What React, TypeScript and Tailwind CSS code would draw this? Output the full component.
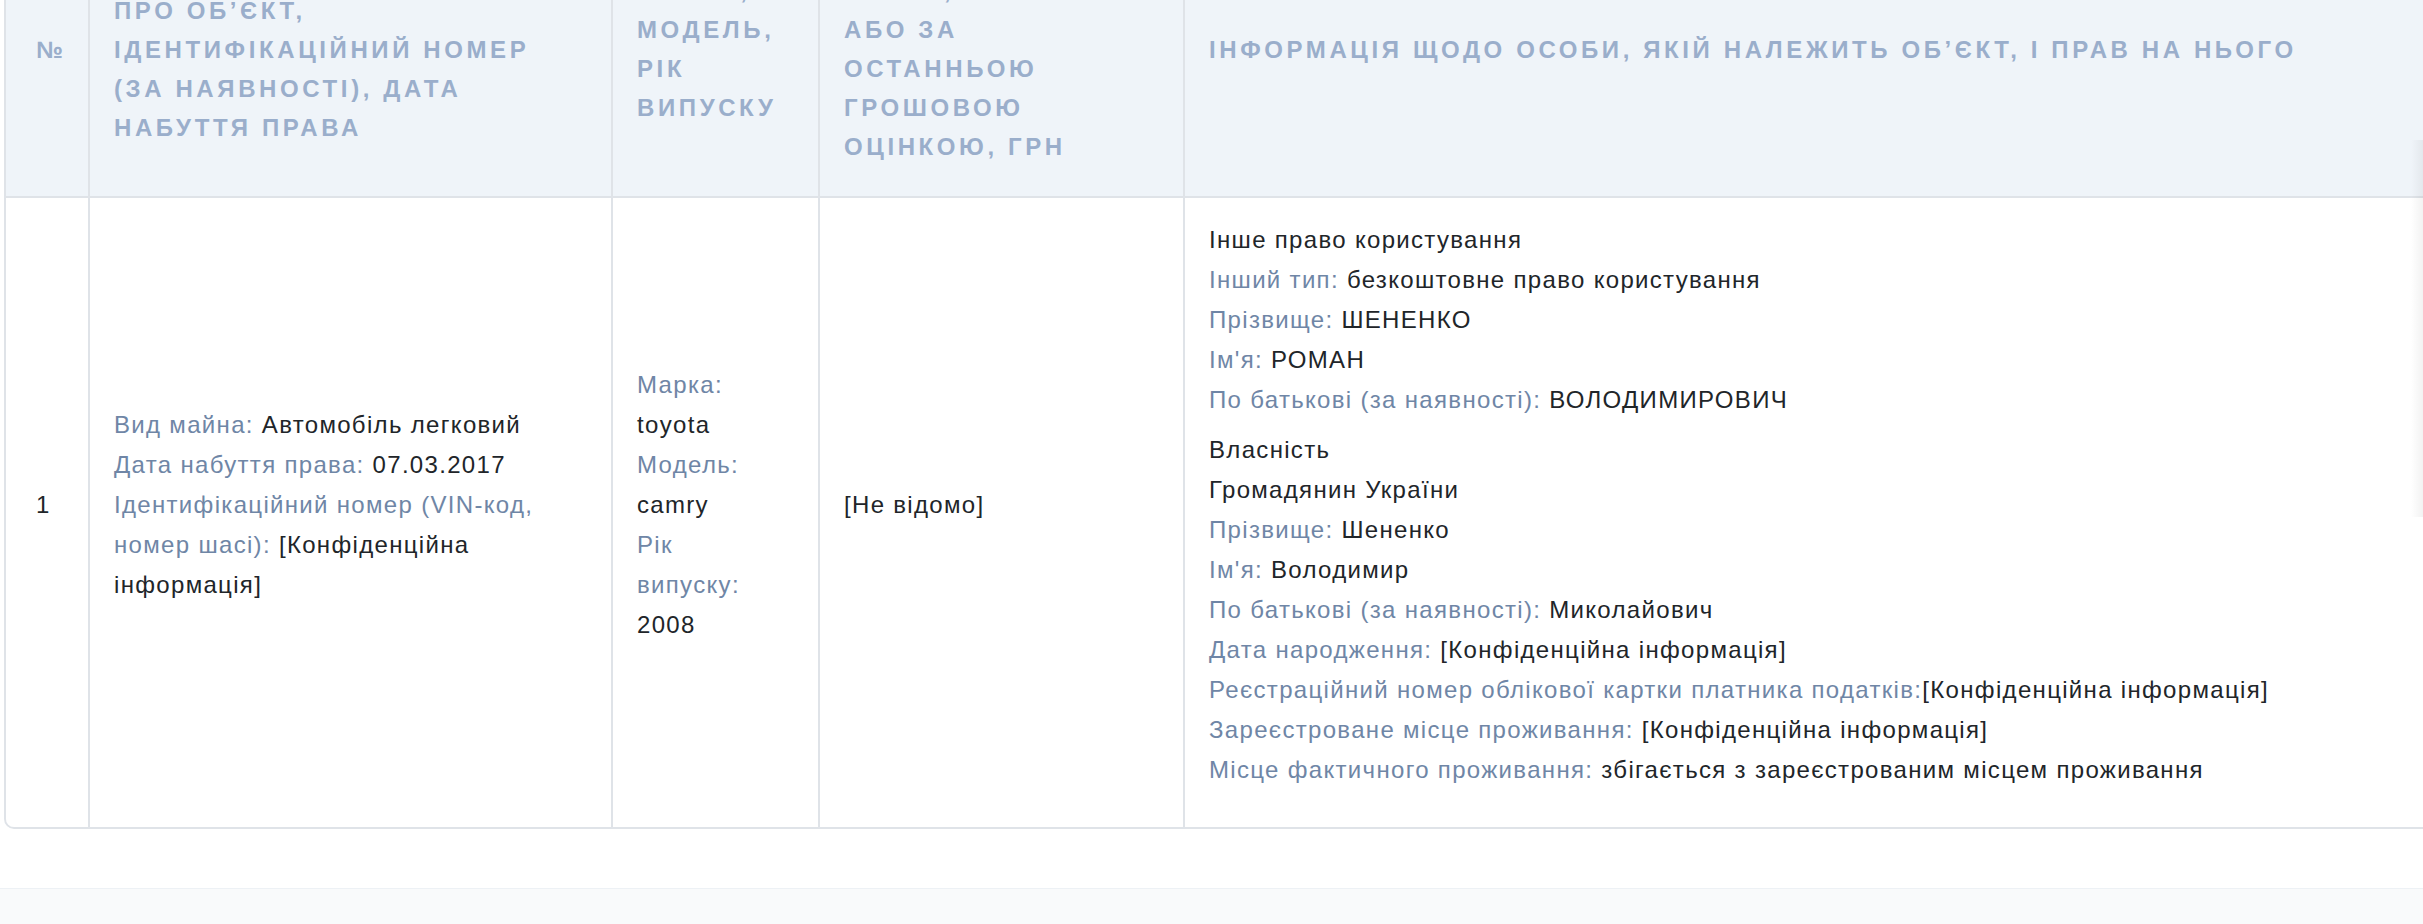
import React from 'react';

type Field = { label?: string; value: string; gap?: boolean };

const ownerGroups: Field[][] = [
  [
    { value: 'Інше право користування' },
    { label: 'Інший тип:', value: 'безкоштовне право користування' },
    { label: 'Прізвище:', value: 'ШЕНЕНКО' },
    { label: "Ім'я:", value: 'РОМАН' },
    { label: 'По батькові (за наявності):', value: 'ВОЛОДИМИРОВИЧ' },
  ],
  [
    { value: 'Власність' },
    { value: 'Громадянин України' },
    { label: 'Прізвище:', value: 'Шененко' },
    { label: "Ім'я:", value: 'Володимир' },
    { label: 'По батькові (за наявності):', value: 'Миколайович' },
    { label: 'Дата народження:', value: '[Конфіденційна інформація]' },
    { label: 'Реєстраційний номер облікової картки платника податків:', value: '[Конфіденційна інформація]', gap: true },
    { label: 'Зареєстроване місце проживання:', value: '[Конфіденційна інформація]' },
    { label: 'Місце фактичного проживання:', value: 'збігається з зареєстрованим місцем проживання' },
  ],
];

function Line({ label, value, gap }: Field) {
  return (
    <div className="whitespace-nowrap">
      {label && <span className="text-[#6f86a6]">{label}</span>}
      {label && !gap && ' '}
      <span>{value}</span>
    </div>
  );
}

const headCell =
  'flex flex-col justify-center pt-[22px] pb-[30px] px-[24px] bg-[#eff4f9] text-[#9aaecb] font-bold uppercase text-[24px] leading-[39px] tracking-[0.15em] whitespace-nowrap';
const bodyCell =
  'flex flex-col justify-center pt-[22px] pb-[37px] px-[24px] bg-white text-[24px] leading-[40px] tracking-[0.055em]';
const label = 'text-[#6f86a6]';

export default function App() {
  return (
    <div className="relative min-h-screen overflow-hidden bg-white font-['Liberation_Sans',Arial,sans-serif] text-[#212529]">
      {/* table card, scrolled so the header top is out of view */}
      <div className="-mt-[92px] pl-[4px]">
        <div className="w-[2480px] overflow-hidden rounded-[10px] border-2 border-[#dfe3e8]">
          <div className="grid grid-cols-[82px_521px_205px_363px_1fr] gap-[2px] bg-[#dfe3e8]">
            {/* header */}
            <div className={`${headCell} !pl-[30px] !pr-0`}>№</div>
            <div className={headCell}>
              <div>Вид майна, відомості</div>
              <div>про об’єкт,</div>
              <div>ідентифікаційний номер</div>
              <div>(за наявності), дата</div>
              <div>набуття права</div>
            </div>
            <div className={headCell}>
              <div>Марка,</div>
              <div>модель,</div>
              <div>рік</div>
              <div>випуску</div>
            </div>
            <div className={headCell}>
              <div>Вартість на дату</div>
              <div>права,</div>
              <div>або за</div>
              <div>останньою</div>
              <div>грошовою</div>
              <div>оцінкою, грн</div>
            </div>
            <div className={headCell}>
              <div>Інформація щодо особи, якій належить об’єкт, і прав на нього</div>
            </div>

            {/* row 1 */}
            <div className={`${bodyCell} !pl-[30px] !pr-0`}>1</div>
            <div className={bodyCell}>
              <div>
                <span className={label}>Вид майна:</span> Автомобіль легковий
              </div>
              <div>
                <span className={label}>Дата набуття права:</span> 07.03.2017
              </div>
              <div>
                <span className={label}>Ідентифікаційний номер (VIN-код, номер шасі):</span> [Конфіденційна
                інформація]
              </div>
            </div>
            <div className={bodyCell}>
              <div className={label}>Марка:</div>
              <div>toyota</div>
              <div className={label}>Модель:</div>
              <div>camry</div>
              <div className={label}>
                Рік
                <br />
                випуску:
              </div>
              <div>2008</div>
            </div>
            <div className={bodyCell}>[Не відомо]</div>
            <div className={`${bodyCell} gap-[10px]`}>
              {ownerGroups.map((group, i) => (
                <div key={i}>
                  {group.map((f, j) => (
                    <Line key={j} {...f} />
                  ))}
                </div>
              ))}
            </div>
          </div>
        </div>
      </div>

      {/* footer band */}
      <div className="mt-[59px] h-[120px] border-t border-[#edf1f5] bg-[#f9fafb]" />

      {/* horizontal scroll shadow */}
      <div className="pointer-events-none absolute right-0 top-[140px] h-[377px] w-[12px] bg-linear-to-l from-black/[0.05] to-transparent" />
    </div>
  );
}
